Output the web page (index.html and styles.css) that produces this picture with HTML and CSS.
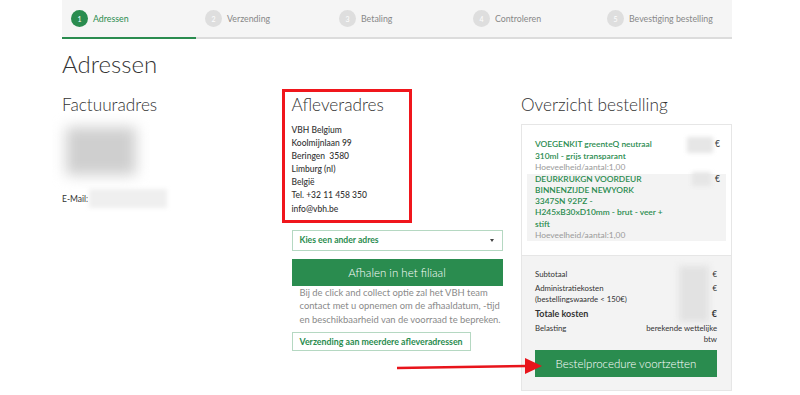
FILE: index.html
```html
<!DOCTYPE html>
<html lang="nl">
<head>
    <meta charset="UTF-8">
    <meta name="viewport" content="width=device-width, initial-scale=1.0">
    <title>Adressen</title>
    <link rel="stylesheet" href="styles.css">
</head>
<body>
    <div class="page">
        <div class="steps">
            <div class="step active"><span class="step-num">1</span>Adressen</div>
            <div class="step"><span class="step-num">2</span>Verzending</div>
            <div class="step"><span class="step-num">3</span>Betaling</div>
            <div class="step"><span class="step-num">4</span>Controleren</div>
            <div class="step"><span class="step-num">5</span>Bevestiging bestelling</div>
        </div>

        <h1 class="page-title">Adressen</h1>

        <div class="columns">
            <div class="col">
                <h2 class="col-title">Factuuradres</h2>
                <div class="blurred blurred-address"></div>
                <div class="email-row">E-Mail:<span class="blurred blurred-email"></span></div>
            </div>

            <div class="col col-delivery">
                <div class="highlight"></div>
                <h2 class="col-title">Afleveradres</h2>
                <div class="address">
                    VBH Belgium<br>
                    Koolmijnlaan 99<br>
                    Beringen&nbsp; 3580<br>
                    Limburg (nl)<br>
                    België<br>
                    Tel. +32 11 458 350<br>
                    info@vbh.be
                </div>
                <div class="select-box">
                    <span>Kies een ander adres</span>
                    <span class="caret"></span>
                </div>
                <button class="btn-green btn-pickup">Afhalen in het filiaal</button>
                <p class="pickup-note">Bij de click and collect optie zal het VBH team contact met u opnemen om de afhaaldatum, -tijd en beschikbaarheid van de voorraad te bepreken.</p>
                <button class="btn-outline">Verzending aan meerdere afleveradressen</button>
            </div>

            <div class="col">
                <h2 class="col-title">Overzicht bestelling</h2>
                <div class="summary">
                    <div class="items">
                        <div class="item">
                            <div class="item-info">
                                <div class="item-name">VOEGENKIT greenteQ neutraal 310ml - grijs transparant</div>
                                <div class="item-qty">Hoeveelheid/aantal:1,00</div>
                            </div>
                            <div class="item-price"><span class="blurred blurred-price"></span>€</div>
                        </div>
                        <div class="item item-alt">
                            <div class="item-info">
                                <div class="item-name">DEURKRUKGN VOORDEUR BINNENZIJDE NEWYORK 3347SN 92PZ - H245xB30xD10mm - brut - veer + stift</div>
                                <div class="item-qty">Hoeveelheid/aantal:1,00</div>
                            </div>
                            <div class="item-price"><span class="blurred blurred-price short"></span>€</div>
                        </div>
                    </div>
                    <div class="totals">
                        <div class="blurred blurred-totals"></div>
                        <div class="total-row"><span>Subtotaal</span><span>€</span></div>
                        <div class="total-row"><span>Administratiekosten<br>(bestellingswaarde &lt; 150€)</span><span>€</span></div>
                        <div class="total-row total-main"><span>Totale kosten</span><span>€</span></div>
                        <div class="total-row"><span>Belasting</span><span class="tax">berekende wettelijke btw</span></div>
                        <button class="btn-green btn-order">Bestelprocedure voortzetten</button>
                    </div>
                </div>
            </div>
        </div>

        <svg class="arrow" width="146" height="20" viewBox="0 0 146 20">
            <line x1="0" y1="11" x2="130" y2="9" stroke="#e8141b" stroke-width="2.6"/>
            <polygon points="128,1 145,9 128,17" fill="#e8141b"/>
        </svg>
    </div>
</body>
</html>
```

FILE: styles.css
```css
body {
    margin: 0;
    font-family: Lato, "Open Sans", sans-serif;
    color: #333;
    background: #fff;
}
.page {
    position: relative;
    width: 670px;
    margin-left: 62px;
}

/* steps */
.steps {
    display: grid;
    grid-template-columns: repeat(5, 1fr);
    background: #f5f5f5;
}
.step {
    display: flex;
    align-items: center;
    gap: 5px;
    height: 37px;
    padding-left: 9px;
    border-bottom: 2px solid #dcdcdc;
    font-size: 8.8px;
    color: #888;
}
.step-num {
    width: 17px;
    height: 17px;
    border-radius: 50%;
    background: #dedede;
    color: #fff;
    font-size: 7px;
    display: flex;
    align-items: center;
    justify-content: center;
}
.step.active {
    color: #2a8c4f;
    border-bottom-color: #2a8c4f;
}
.step.active .step-num {
    background: #2a8c4f;
}

.page-title {
    margin: 10px 0 0;
    font-size: 24px;
    font-weight: 300;
    line-height: 29px;
}

/* columns */
.columns {
    display: grid;
    grid-template-columns: 211px 211px 211px;
    column-gap: 18.5px;
    margin-top: 17px;
}
.col {
    position: relative;
}
.col-title {
    margin: 0;
    font-size: 17.2px;
    font-weight: 300;
    line-height: 20px;
}

.blurred {
    display: block;
    background: #d8d8d8;
    filter: blur(5px);
}
.blurred-address {
    width: 70px;
    height: 48px;
    margin: 12px 0 0 4px;
    background: #cfcfcf;
    filter: blur(7px);
}
.email-row {
    display: flex;
    align-items: center;
    margin-top: 14px;
    font-size: 8.5px;
}
.blurred-email {
    width: 78px;
    height: 19px;
    margin-left: 1px;
    background: #efefef;
    filter: blur(2px);
}

/* delivery */
.highlight {
    position: absolute;
    left: -10px;
    top: -6px;
    width: 124px;
    height: 128px;
    border: 3px solid #f0161c;
}
.address {
    margin-top: 9px;
    font-size: 8.5px;
    line-height: 13.1px;
    font-weight: 500;
}
.select-box {
    display: flex;
    justify-content: space-between;
    align-items: center;
    height: 19px;
    margin-top: 14px;
    padding: 0 8px 0 7px;
    border: 1px solid #b5d8c2;
    color: #2a8c4f;
    font-size: 8.6px;
    font-weight: 700;
}
.caret {
    width: 0;
    height: 0;
    border-left: 2.5px solid transparent;
    border-right: 2.5px solid transparent;
    border-top: 3px solid #444;
}
.btn-green {
    display: block;
    width: 100%;
    border: 0;
    background: #2a8c4f;
    color: #fff;
    font-family: inherit;
    font-weight: 300;
}
.btn-pickup {
    height: 27px;
    margin-top: 8px;
    font-size: 11.5px;
}
.pickup-note {
    margin: 0 0 0 8px;
    font-size: 9.4px;
    line-height: 13.7px;
    color: #8a8a8a;
}
.btn-outline {
    display: block;
    margin-top: 5px;
    height: 19px;
    padding: 0 7px;
    background: #fff;
    border: 1px solid #b5d8c2;
    color: #2a8c4f;
    font-family: inherit;
    font-size: 8.8px;
    font-weight: 700;
}

/* order summary */
.summary {
    margin-top: 9px;
    border: 1px solid #e6e6e6;
}
.items {
    padding: 14px 5px 14px;
}
.item {
    display: flex;
    justify-content: space-between;
    padding: 0 6px 0 8px;
    font-size: 8.4px;
    line-height: 11.5px;
}
.item-alt {
    background: #f3f3f3;
    line-height: 11.3px;
}
.item-info {
    width: 130px;
}
.item-name {
    color: #2a8c4f;
    font-weight: 600;
}
.item-qty {
    color: #9a9a9a;
}
.item-price {
    display: flex;
    align-items: flex-start;
    font-size: 8.5px;
}
.blurred-price {
    width: 26px;
    height: 16px;
    margin: -2px 2px 0 0;
    background: #e6e6e6;
    filter: blur(2px);
}
.blurred-price.short {
    width: 19px;
    height: 14px;
    margin-right: 4px;
}
.totals {
    position: relative;
    padding: 13px 14px 13px 13px;
    background: #f3f3f3;
    border-top: 1px solid #e6e6e6;
    font-size: 7.8px;
    line-height: 10.5px;
}
.blurred-totals {
    position: absolute;
    right: 22px;
    top: 10px;
    width: 30px;
    height: 56px;
    background: #e2e2e2;
    filter: blur(3px);
}
.total-row {
    position: relative;
    display: flex;
    justify-content: space-between;
    margin-bottom: 3.5px;
}
.total-main {
    margin: 4px 0 3px;
    font-size: 9px;
    line-height: 12px;
    font-weight: 700;
}
.tax {
    width: 80px;
    text-align: right;
}
.btn-order {
    height: 27px;
    margin-top: 6px;
    font-size: 11.5px;
}

.arrow {
    position: absolute;
    left: 335px;
    top: 357px;
}
```
